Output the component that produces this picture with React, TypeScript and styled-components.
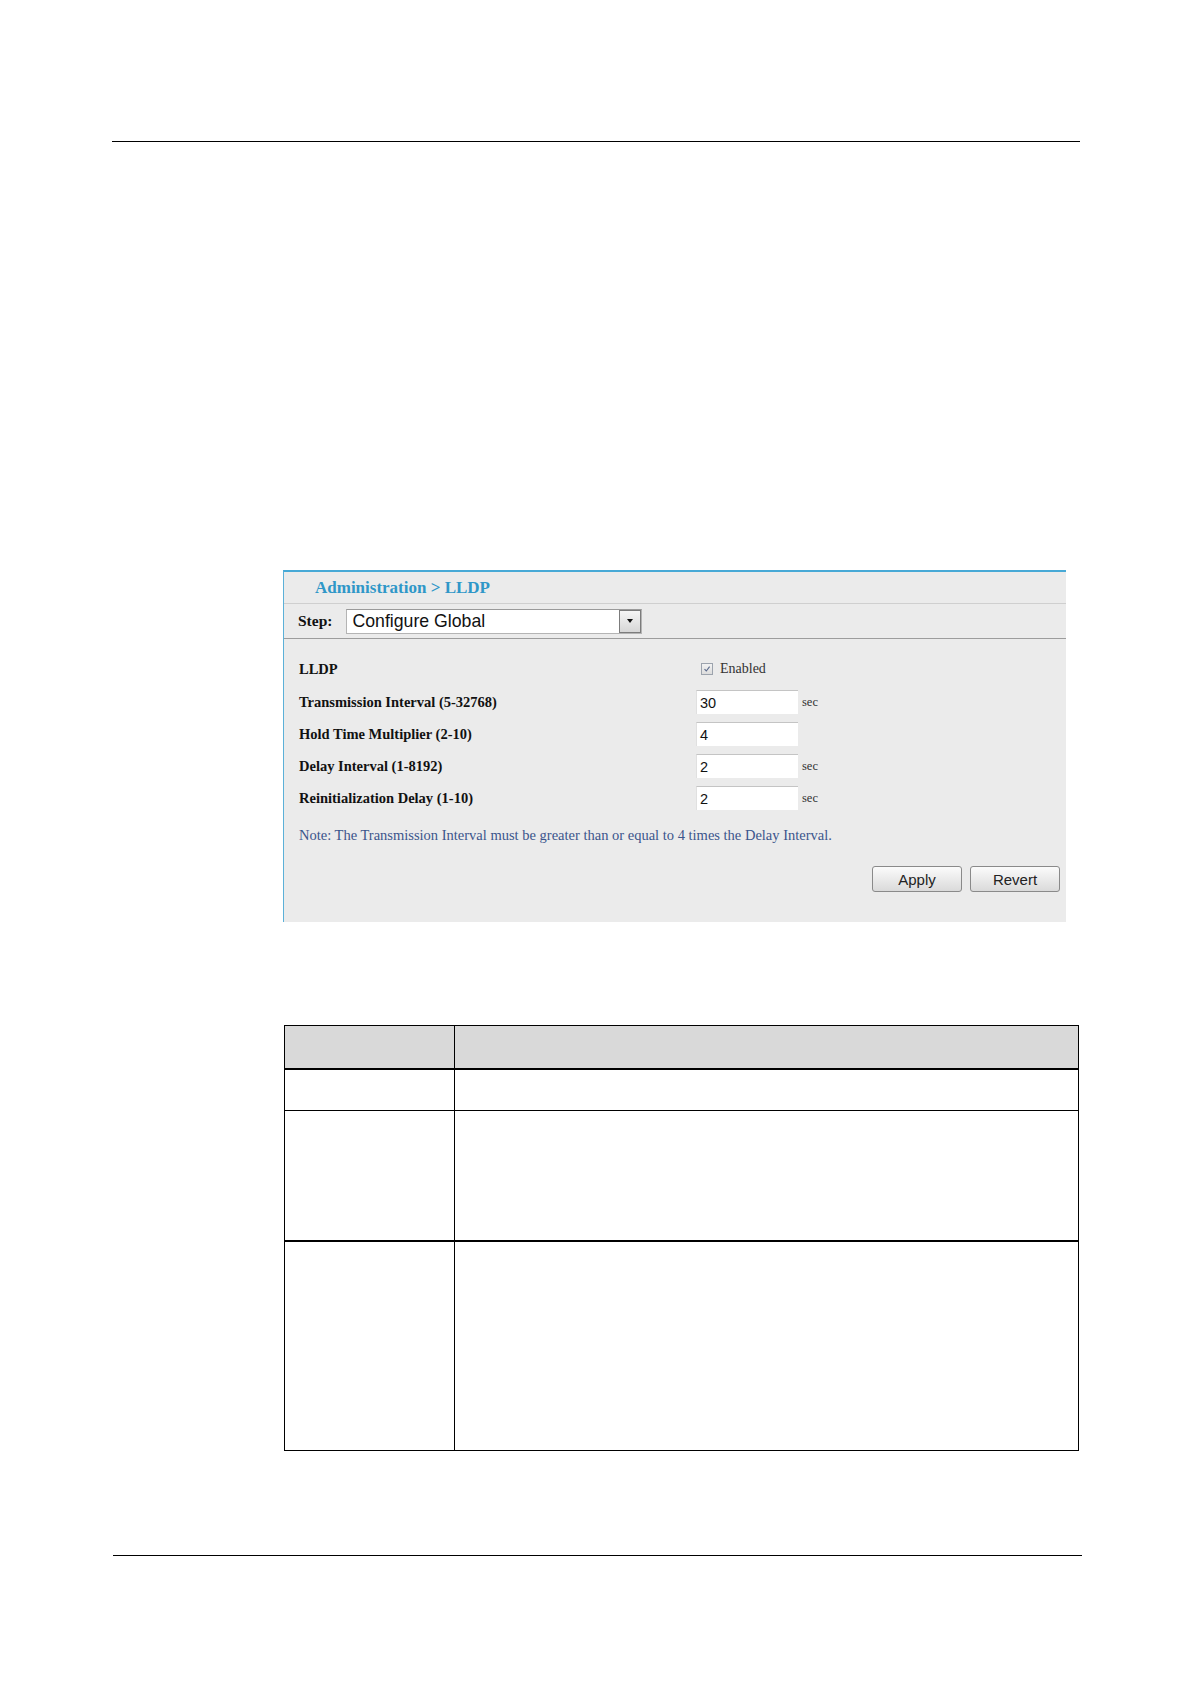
import React from "react";
import styled, { createGlobalStyle } from "styled-components";

const GlobalStyle = createGlobalStyle`
  html, body {
    margin: 0;
    padding: 0;
    background: #ffffff;
  }
  body {
    font-family: "Liberation Serif", "Times New Roman", serif;
  }
`;

const Page = styled.div`
  width: 1190px;
  height: 1684px;
  display: flex;
  flex-direction: column;
  box-sizing: border-box;
  padding-top: 141px;
`;

const Rule = styled.div<{ $left: number; $width: number }>`
  margin-left: ${(p) => p.$left}px;
  width: ${(p) => p.$width}px;
  height: 0;
  border-top: 1.5px solid #000;
`;

const Panel = styled.div`
  margin-top: 428px;
  margin-left: 283px;
  width: 783px;
  height: 352px;
  box-sizing: border-box;
  background: #ebebeb;
  border-top: 2px solid #47a9d6;
  border-left: 1px solid #5bb0d8;
  display: flex;
  flex-direction: column;
`;

const TitleBar = styled.div`
  height: 31px;
  display: flex;
  align-items: center;
  padding-left: 31px;
  border-bottom: 1px solid #cfcfcf;
  font-weight: bold;
  font-size: 17px;
  color: #2f97c8;
`;

const StepBar = styled.div`
  height: 34px;
  display: flex;
  align-items: center;
  padding-left: 14px;
  gap: 14px;
  border-bottom: 1px solid #9c9c9c;
`;

const StepLabel = styled.span`
  font-weight: bold;
  font-size: 15.5px;
  color: #111;
`;

const Select = styled.div`
  width: 296px;
  height: 25px;
  box-sizing: border-box;
  background: #fff;
  border: 1px solid #b4b4b4;
  border-top-color: #9a9a9a;
  display: flex;
  align-items: center;
  justify-content: space-between;
  padding-left: 5px;
  font-family: "Liberation Sans", Arial, sans-serif;
  font-size: 17.7px;
  color: #111;
`;

const SelectButton = styled.div`
  width: 22px;
  height: 23px;
  box-sizing: border-box;
  border: 1px solid #7c7c7c;
  background: linear-gradient(#f6f6f6, #d6d6d6);
  display: flex;
  align-items: center;
  justify-content: center;
`;

const Arrow = styled.div`
  width: 0;
  height: 0;
  border-left: 3.5px solid transparent;
  border-right: 3.5px solid transparent;
  border-top: 4px solid #111;
`;

const Body = styled.div`
  padding: 13px 6px 0 15px;
  display: flex;
  flex-direction: column;
`;

const FieldRow = styled.div<{ $h: number }>`
  height: ${(p) => p.$h}px;
  display: grid;
  grid-template-columns: 397px 1fr;
  align-items: center;
`;

const Label = styled.span`
  font-weight: bold;
  font-size: 14.5px;
  color: #111;
`;

const Value = styled.div`
  display: flex;
  align-items: center;
  gap: 4px;
`;

const Input = styled.div`
  width: 102px;
  height: 24px;
  box-sizing: border-box;
  background: #fff;
  border-top: 1px solid #c4c4c4;
  border-left: 1px solid #e0e0e0;
  display: flex;
  align-items: center;
  padding-left: 3px;
  font-family: "Liberation Sans", Arial, sans-serif;
  font-size: 14.5px;
  color: #111;
`;

const Unit = styled.span`
  font-size: 12.5px;
  color: #333;
`;

const CheckWrap = styled.div`
  display: flex;
  align-items: center;
  gap: 7px;
  padding-left: 5px;
  font-size: 14px;
  color: #333;
`;

const Box = styled.div`
  width: 10px;
  height: 10px;
  border: 1px solid #9ca3ad;
  background: linear-gradient(#f2f2f2, #dcdcdc);
  display: flex;
  align-items: center;
  justify-content: center;
`;

const Note = styled.div`
  margin-top: 13px;
  font-size: 14.5px;
  color: #3b558c;
`;

const Buttons = styled.div`
  margin-top: 22px;
  display: flex;
  justify-content: flex-end;
  gap: 8px;
`;

const Button = styled.div`
  width: 90px;
  height: 26px;
  box-sizing: border-box;
  border: 1px solid #8a8a8a;
  border-radius: 3px;
  background: linear-gradient(#fbfbfb, #dadada);
  display: flex;
  align-items: center;
  justify-content: center;
  font-family: "Liberation Sans", Arial, sans-serif;
  font-size: 15px;
  color: #222;
`;

const Table = styled.div`
  margin-top: 103px;
  margin-left: 284px;
  width: 795px;
  box-sizing: border-box;
  border: 1.5px solid #000;
  display: grid;
  grid-template-columns: 169px 1fr;
`;

const Cell = styled.div<{ $h: number; $head?: boolean; $last?: boolean; $thick?: boolean; $right?: boolean }>`
  height: ${(p) => p.$h}px;
  background: ${(p) => (p.$head ? "#d9d9d9" : "#fff")};
  border-bottom: ${(p) => (p.$last ? "0" : p.$thick ? "2.5px" : "1.5px")} solid #000;
  border-left: ${(p) => (p.$right ? "1.5px solid #000" : "0")};
`;

const Spacer = styled.div`
  flex: 1;
`;

const fields = [
  { label: "Transmission Interval (5-32768)", value: "30", unit: "sec" },
  { label: "Hold Time Multiplier (2-10)", value: "4", unit: "" },
  { label: "Delay Interval (1-8192)", value: "2", unit: "sec" },
  { label: "Reinitialization Delay (1-10)", value: "2", unit: "sec" },
];

const rows = [
  { h: 42, head: true, thick: true },
  { h: 40 },
  { h: 129, thick: true },
  { h: 208, last: true },
];

export default function App() {
  return (
    <Page>
      <GlobalStyle />
      <Rule $left={112} $width={968} />
      <Panel>
        <TitleBar>Administration &gt; LLDP</TitleBar>
        <StepBar>
          <StepLabel>Step:</StepLabel>
          <Select>
            Configure Global
            <SelectButton>
              <Arrow />
            </SelectButton>
          </Select>
        </StepBar>
        <Body>
          <FieldRow $h={34}>
            <Label>LLDP</Label>
            <CheckWrap>
              <Box>
                <svg width="8" height="8" viewBox="0 0 8 8">
                  <path d="M1.5 4.2 L3.3 6 L6.6 1.6" fill="none" stroke="#5a6a8c" strokeWidth="1.1" />
                </svg>
              </Box>
              Enabled
            </CheckWrap>
          </FieldRow>
          {fields.map((f) => (
            <FieldRow $h={32} key={f.label}>
              <Label>{f.label}</Label>
              <Value>
                <Input>{f.value}</Input>
                {f.unit && <Unit>{f.unit}</Unit>}
              </Value>
            </FieldRow>
          ))}
          <Note>
            Note: The Transmission Interval must be greater than or equal to 4 times the Delay Interval.
          </Note>
          <Buttons>
            <Button>Apply</Button>
            <Button>Revert</Button>
          </Buttons>
        </Body>
      </Panel>
      <Table>
        {rows.map((r, i) => (
          <React.Fragment key={i}>
            <Cell $h={r.h} $head={r.head} $thick={r.thick} $last={r.last} />
            <Cell $h={r.h} $head={r.head} $thick={r.thick} $last={r.last} $right />
          </React.Fragment>
        ))}
      </Table>
      <Spacer />
      <Rule $left={113} $width={969} />
      <div style={{ height: 128 }} />
    </Page>
  );
}
